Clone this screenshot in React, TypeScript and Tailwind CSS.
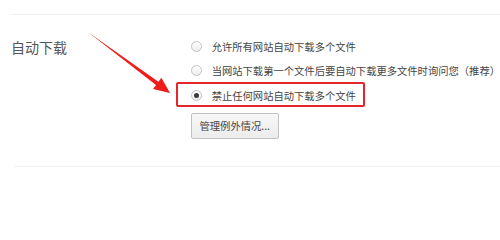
import React from 'react';

const OPTIONS = [
  { id: 'allow', label: '允许所有网站自动下载多个文件', checked: false },
  { id: 'ask', label: '当网站下载第一个文件后要自动下载更多文件时询问您（推荐）', checked: false },
  { id: 'block', label: '禁止任何网站自动下载多个文件', checked: true },
];

function Radio({ checked }: { checked: boolean }) {
  return (
    <span className="w-[11px] h-[11px] shrink-0 rounded-full border border-[#c4c4c4] bg-gradient-to-b from-white to-[#ececec] flex items-center justify-center">
      {checked && <span className="w-[5px] h-[5px] rounded-full bg-[#3a3a3a]" />}
    </span>
  );
}

function Arrow() {
  return (
    <svg className="absolute left-0 top-0 pointer-events-none" width="500" height="214" viewBox="0 0 500 214">
      <polygon
        points="88.5,32.6 158.4,81.8 161.4,77.8 170,93 153,89 156,85"
        fill="#f01c1c"
      />
    </svg>
  );
}

export default function App() {
  return (
    <div
      className="relative w-[500px] h-[214px] overflow-hidden bg-white text-[#444]"
      style={{ fontFamily: '"Noto Sans CJK SC", "Noto Sans", sans-serif' }}
    >
      <div className="ml-[10px] mt-[14px] border-t border-[#f0f0f0]" />
      <div className="flex mt-[19px] pl-[11px]">
        <div className="w-[181px] pt-[2px] h-[24.5px] flex items-center text-[14px] text-[#555]">自动下载</div>
        <div className="relative flex flex-col">
          {OPTIONS.map(o => (
            <div key={o.id} className="h-[24.5px] flex items-center gap-[10px] text-[10.3px] whitespace-nowrap">
              <Radio checked={o.checked} />
              <span>{o.label}</span>
            </div>
          ))}
          <span className="absolute left-[-15px] top-[48px] w-[189px] h-[25px] border-2 border-[#e4252a] rounded-[2px]" />
          <button className="mt-[5.5px] w-[88px] h-[26px] border border-[#c2c2c2] rounded-[2px] bg-gradient-to-b from-[#f8f8f8] to-[#ececec] text-[10.3px] text-[#444]">
            管理例外情况...
          </button>
        </div>
      </div>
      <div className="ml-[15px] mt-[27px] border-t border-[#eeeeee]" />
      <Arrow />
    </div>
  );
}
